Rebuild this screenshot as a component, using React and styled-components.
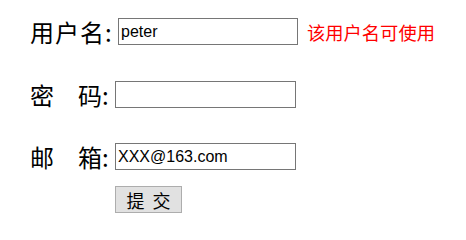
import styled, { createGlobalStyle } from "styled-components";

const GlobalStyle = createGlobalStyle`
  body {
    margin: 0;
    background: #fff;
    font-family: "Noto Sans CJK SC", "Liberation Sans", sans-serif;
  }
`;

const Form = styled.form`
  display: flex;
  flex-direction: column;
  padding: 18px 0 0 30px;
`;

const Row = styled.div`
  display: flex;
  align-items: center;
  height: 27px;
  margin-bottom: ${(p) => p.$gap}px;
`;

const Label = styled.label`
  font-size: 24px;
  color: #000;
  line-height: 27px;
  width: ${(p) => p.$width}px;
  white-space: pre;
  letter-spacing: ${(p) => p.$spacing || 0}px;
`;

const Input = styled.input`
  box-sizing: border-box;
  width: ${(p) => p.$width || 181}px;
  height: 27px;
  margin: 0;
  padding: 0 2px;
  border: 1px solid #767676;
  font-family: "Liberation Sans", sans-serif;
  font-size: 16px;
  color: #000;
  outline: none;
`;

const Hint = styled.span`
  margin-left: 9px;
  font-size: 18.3px;
  color: #ff0000;
`;

const Submit = styled.button`
  box-sizing: border-box;
  width: 67px;
  height: 27px;
  margin-left: 85px;
  padding: 0 0 0 2px;
  border: 1px solid #adadad;
  background: #e1e1e1;
  font-family: "Noto Sans CJK SC", sans-serif;
  font-size: 18px;
  letter-spacing: 2px;
  line-height: 1;
  color: #000;
  white-space: pre;
`;

export default function App() {
  return (
    <>
      <GlobalStyle />
      <Form onSubmit={(e) => e.preventDefault()}>
        <Row $gap={36}>
          <Label $width={88} $spacing={1}>用户名:</Label>
          <Input type="text" defaultValue="peter" $width={180} />
          <Hint>该用户名可使用</Hint>
        </Row>
        <Row $gap={35}>
          <Label $width={85}>密　码:</Label>
          <Input type="password" />
        </Row>
        <Row $gap={16}>
          <Label $width={85}>邮　箱:</Label>
          <Input type="text" defaultValue="XXX@163.com" />
        </Row>
        <Row $gap={0}>
          <Submit type="submit">提 交</Submit>
        </Row>
      </Form>
    </>
  );
}
